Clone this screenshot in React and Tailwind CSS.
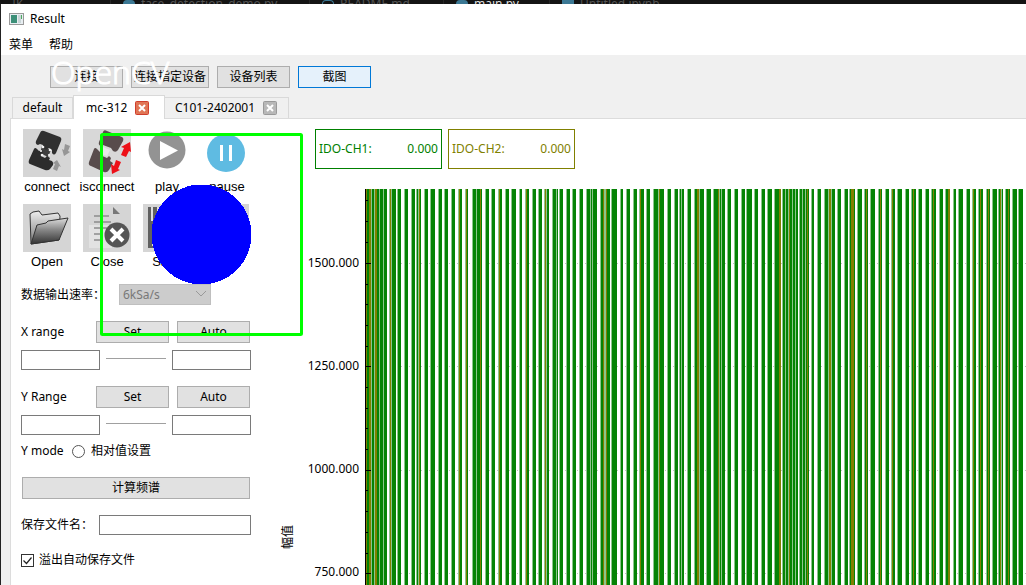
const STRIPES = [
  [366, "OGGOOLGGLOOGGLGGGLGGG"], [389, "LOLGGGG"], [397, "LGGG"], [404, "LGGG"], [411, "LGGG"],
  [416, "LGLOG"], [424, "LGGG"], [430, "LGGGG"], [438, "LGGG"], [444, "LGGG"], [451, "LGGG"],
  [458, "LOGG"], [465, "LOG"], [472, "LGGGLGGGOG"], [485, "LGGG"], [491, "LGGG"], [498, "LOGG"],
  [505, "LGGG"], [511, "LGGGG"], [519, "LGG"], [525, "LOGG"], [532, "LGGG"], [538, "LGGG"],
  [544, "LOLGG"], [552, "LGGGLG"], [559, "LGGG"], [566, "LGGG"], [572, "LGGG"], [579, "LGGG"],
  [586, "LGGGLGLGGGG"], [600, "LGGOLLOGGG"], [611, "LGGGGG"], [620, "LGG"], [626, "LGGG"],
  [633, "LGGG"], [639, "LOGGG"], [646, "LGGG"], [653, "LGGGGLOGGGG"], [667, "LGGG"], [674, "LGGG"],
  [679, "LGLGG"], [687, "LGGG"], [694, "LGGOOLGGGG"], [706, "LGGGG"], [713, "LGGGGOLGLGGG"],
  [727, "LGGG"], [734, "LGGG"], [741, "LGGG"], [746, "LGGGGG"], [754, "LGGG"], [761, "LGGG"],
  [767, "LGGGG"], [774, "LGGGGOO"], [782, "LGGLGGLOGGLGGLGG"], [799, "LGGLGGLGOG"], [811, "LGG"],
  [817, "LGGG"], [824, "LGGGLOOLGGG"], [837, "LGGG"], [844, "LGGG"], [849, "LGOOOG"],
  [857, "LGGGG"], [864, "LGOG"], [870, "LGGGG"], [878, "LGOG"], [885, "LGGG"], [891, "LOGG"],
  [897, "LGGGG"], [905, "LGGG"], [911, "LGOGG"], [918, "LGGG"], [925, "LGGG"], [931, "LGOGG"],
  [939, "LGGG"], [945, "LGGOO"], [953, "LGG"], [958, "LGGGG"], [966, "LGGG"], [972, "LOGG"],
  [978, "LGOGG"], [986, "LGOG"], [992, "LGGGG"], [998, "LGOLG"], [1005, "LGGOG"],
  [1012, "LGGGG"], [1018, "LGGGG"],
];
const TONES = { L: "#8cc68c", G: "#058305", O: "#808000" };
const FIRST = 365;
const MAJOR = [74, 177, 281, 384];
const MINOR = [11, 32, 53, 95, 115, 136, 157, 198, 219, 239, 260, 301, 322, 343, 364];

function Chart() {
  return (
    <svg className="block h-full w-full" shapeRendering="crispEdges" aria-label="幅值">
      {MAJOR.map((y) => (
        <line key={y} x1="0" x2="100%" y1={y + 0.5} y2={y + 0.5} stroke="#c4c4c4" strokeDasharray="1 3" />
      ))}
      {STRIPES.map(([x, run]) =>
        [...run].map((tone, i) => (
          <rect key={x + i} x={x + i - FIRST} y="0" width="1" height="100%" fill={TONES[tone]} />
        ))
      )}
      <rect x="0" y="0" width="1" height="100%" fill="#000" />
      {MAJOR.map((y) => <rect key={y} x="0" y={y} width="6" height="1" />)}
      {MINOR.map((y) => <rect key={y} x="0" y={y} width="3" height="1" />)}
    </svg>
  );
}

const plug = "M17 4 Q18 1 21 2 L37 8 Q39 9 38 12 L33 24 Q31 27 29 24 L29 21 L26 19 L23 21 L20 19 L20 16 L17 15 L15 16 Q12 15 13 12 Z";
const socket = "M11 20 Q12 18 14 20 L16 22 L19 21 L20 25 L18 27 L22 29 L24 27 L27 29 L26 31 L29 32 Q31 34 30 36 L27 40 Q25 42 22 41 L7 35 Q5 34 6 31 Z";

function ConnectIcon() {
  return (
    <svg className="block size-12 bg-[#d5d5d5]" viewBox="0 0 48 48" aria-hidden="true">
      <path d="M19 17 L28 21 L25 28 L17 24 Z" fill="#404040" />
      <path d={plug} fill="#303030" />
      <path d={socket} fill="#2c2c2c" />
      <g fill="#f4f4f4">
        <circle cx="20" cy="18" r="1.3" /><circle cx="27" cy="21" r="1.3" />
        <circle cx="18" cy="22" r="1.1" /><circle cx="26" cy="26" r="1.1" />
        <circle cx="19" cy="26" r="1.3" />
      </g>
      <path d="M42 15 L47 17 L45 22 L47 23 L41 27 L39 20 L41 21 Z" fill="#969696" />
      <path d="M34 31 L38 38 L36 37 L34 42 L30 40 L32 35 L30 34 Z" fill="#969696" />
    </svg>
  );
}

function DisconnectIcon() {
  return (
    <svg className="block size-12 bg-[#d8d8d8]" viewBox="0 0 48 48" aria-hidden="true">
      <g fill="#584c4c">
        <path d="M20 3 Q21 0 24 2 L39 8 Q41 9 40 12 L35 21 Q33 24 30 22 L28 19 L20 16 L18 17 Q15 16 16 13 Z" />
        <path d="M11 20 Q12 18 14 20 L17 23 L17 26 L24 29 L26 27 L28 29 L27 32 L30 34 L26 41 Q24 44 21 43 L8 37 Q5 36 6 33 Z" />
      </g>
      <path d="M20 18 L27 21 L24 27 L18 25 Z" fill="#e8e8e8" />
      <path d="M47 13 L48 23 L46 22 L43 28 L38 26 L41 19 L38 18 Z" fill="#ed1018" />
      <path d="M33 31 L38 33 L35 40 L37 41 L29 45 L28 35 L31 37 Z" fill="#ed1018" />
    </svg>
  );
}

function PlayIcon() {
  return (
    <svg className="block size-12" viewBox="0 0 48 48" aria-hidden="true">
      <circle cx="24" cy="21" r="18.5" fill="#939393" />
      <path d="M17 12 L35 21.5 L17 31 Z" fill="#fff" />
    </svg>
  );
}

function PauseIcon() {
  return (
    <svg className="block size-12" viewBox="0 0 48 48" aria-hidden="true">
      <circle cx="23" cy="24" r="19" fill="#5fbbe2" />
      <path d="M18.5 16v16M27.5 16v16" stroke="#fff" strokeWidth="3" />
    </svg>
  );
}

function OpenIcon() {
  return (
    <svg className="block size-12 bg-[#d5d5d5]" viewBox="0 0 48 48" aria-hidden="true">
      <defs>
        <linearGradient id="folder-back" x1="0" y1="0" x2="0" y2="1">
          <stop offset="0" stopColor="#eee" /><stop offset="1" stopColor="#777" />
        </linearGradient>
        <linearGradient id="folder-front" x1="0" y1="0" x2="0" y2="1">
          <stop offset="0" stopColor="#ddd" /><stop offset=".45" stopColor="#888" /><stop offset="1" stopColor="#333" />
        </linearGradient>
      </defs>
      <path d="M8 40 L7 10 L10 8 L16 7 L19 11 L35 9 L37 12 L36 36 Z" fill="url(#folder-back)" stroke="#333" />
      <path d="M8 40 L14 21 L23 19 L25 17 L45 14 L36 36 Z" fill="url(#folder-front)" stroke="#333" />
    </svg>
  );
}

function CloseIcon() {
  return (
    <svg className="block size-12 bg-[#d5d5d5]" viewBox="0 0 48 48" aria-hidden="true">
      <path d="M6 21h23v23H6z" fill="#e2e2e2" />
      <path d="M30 3 L37 10 H30 Z" fill="#777" />
      <path d="M11 12h15M11 18h17M11 24h13M11 30h9M11 36h9" stroke="#8c8c8c" strokeWidth="1.5" />
      <circle cx="34" cy="31" r="12.5" fill="#555" />
      <path d="M28 25l12 12M40 25L28 37" stroke="#fff" strokeWidth="4" />
    </svg>
  );
}

function SaveIcon() {
  return (
    <svg className="block size-12 bg-[#d5d5d5]" viewBox="0 0 48 48" aria-hidden="true">
      <path d="M5 3 H38 L43 8 V44 H5 Z" fill="#606060" />
      <path d="M8 3h2v14h-2zM14 3h18v16H14zM9 26h30v16H9z" fill="#ddd" />
    </svg>
  );
}

function Tool({ label, children }) {
  return (
    <button className="flex w-12 flex-col items-center gap-0.5 font-['Liberation_Sans',sans-serif] text-[13px] leading-4 whitespace-nowrap">
      {children}
      <span>{label}</span>
    </button>
  );
}

const push = "h-[22px] border border-[#adadad] bg-[#e1e1e1] text-center whitespace-nowrap";
const field = "h-5 min-w-0 border border-[#7a7a7a] bg-white px-1 outline-none";

function Range({ label }) {
  return (
    <fieldset className="flex flex-col gap-[7px]">
      <div className="flex items-center gap-2">
        <legend className="w-[67px]">{label}</legend>
        <button className={`${push} w-[73px]`}>Set</button>
        <button className={`${push} w-[73px]`}>Auto</button>
      </div>
      <div className="flex gap-1.5">
        <input className={`${field} w-[79px]`} aria-label={`${label} from`} />
        <span className="mt-2 h-px w-[60px] bg-[#a0a0a0]" />
        <input className={`${field} w-[79px]`} aria-label={`${label} to`} />
      </div>
    </fieldset>
  );
}

function CloseTab({ active }) {
  return (
    <svg className="size-3.5" viewBox="0 0 14 14" aria-hidden="true">
      <rect x=".5" y=".5" width="13" height="13" rx="1" fill={active ? "#e07555" : "#b8b8b8"} stroke={active ? "#d03e2c" : "#999"} />
      <path d="M4 4l6 6M10 4l-6 6" stroke="#fff" strokeWidth="2" />
    </svg>
  );
}

function Reading({ name, className }) {
  return (
    <div className={`flex h-10 w-[127px] items-center justify-between border px-[3px] ${className}`}>
      <span>{name}</span>
      <output>0.000</output>
    </div>
  );
}

function Annotations() {
  return (
    <svg className="pointer-events-none absolute inset-0 h-full w-full">
      <text x="51" y="84" fill="#fff" stroke="#fff" strokeWidth="1" className="font-['Open_Sans',sans-serif] text-[32px] font-light">OpenCV</text>
      <rect x="101.5" y="134.5" width="200" height="200" rx="1" fill="none" stroke="#0f0" strokeWidth="3" />
      <circle cx="201.5" cy="234.5" r="50" fill="#00f" shapeRendering="crispEdges" />
    </svg>
  );
}

function EditorTab({ name, className, iconClass }) {
  return (
    <span className={`flex shrink-0 gap-1.5 border-l border-[#252525] pl-3 leading-2 whitespace-nowrap ${className}`}>
      <span className={`h-1 w-3 ${iconClass}`} />
      {name}
    </span>
  );
}

export default function App() {
  return (
    <div className="relative flex h-screen flex-col overflow-hidden bg-[#f0f0f0] font-['Noto_Sans','Noto_Sans_CJK_SC',sans-serif] text-xs leading-4 text-black">
      <div className="flex h-1 shrink-0 overflow-hidden bg-[#141414] text-[#555]">
        <span className="w-[110px] shrink-0 pl-3 leading-2">IK</span>
        <EditorTab name="face_detection_demo.py" className="w-[199px]" iconClass="rounded-t-full bg-[#3b7894]" />
        <EditorTab name="README.md" className="w-[134px]" iconClass="rounded-t-full border border-b-0 border-[#3b7894]" />
        <EditorTab name="main.py" className="w-[106px] text-[#ddd]" iconClass="rounded-t-full bg-[#3b7894]" />
        <EditorTab name="Untitled.ipynb" className="w-[138px]" iconClass="bg-[#3b7894]" />
      </div>

      <div className="flex min-h-0 flex-1 flex-col border-l border-[#222]">
        <header className="shrink-0 bg-white">
          <div className="flex h-[30px] items-center gap-1.5 pl-2">
            <svg className="h-3 w-[15px]" viewBox="0 0 15 12" aria-hidden="true">
              <rect x=".5" y=".5" width="14" height="11" fill="#e8eef2" stroke="#999" />
              <rect x="2" y="2" width="6" height="8" fill="#3c8f78" />
              <rect x="9" y="2" width="3" height="8" fill="#c9d6d8" />
              <rect x="12" y="2" width="1" height="4" fill="#4fa860" />
            </svg>
            <h1>Result</h1>
          </div>
          <nav className="flex h-[21px] items-center gap-4 pl-2">
            <button>菜单</button>
            <button>帮助</button>
          </nav>
        </header>

        <div className="flex shrink-0 gap-2 pt-[11px] pl-[49px]">
          <button className={`${push} w-[73px]`}>连接</button>
          <button className={`${push} w-[78px]`}>连接指定设备</button>
          <button className={`${push} w-[73px]`}>设备列表</button>
          <button className="h-[22px] w-[73px] border border-[#0078d7] bg-[#e5f1fb]">截图</button>
        </div>

        <div className="mt-[7px] flex h-[23px] shrink-0 items-end pl-[11px]" role="tablist">
          <button role="tab" className="h-[21px] w-[61px] border border-b-0 border-[#d9d9d9]">default</button>
          <button role="tab" aria-selected="true" className="z-10 -mb-px flex h-6 w-[92px] items-center gap-2 border border-b-0 border-[#d9d9d9] bg-white pl-3">
            mc-312 <CloseTab active />
          </button>
          <button role="tab" className="flex h-[21px] w-[124px] items-center gap-2 border border-b-0 border-l-0 border-[#d9d9d9] pl-2.5">
            C101-2402001 <CloseTab />
          </button>
        </div>

        <main className="ml-[9px] flex min-h-0 flex-1 border-t border-l border-[#dcdcdc] bg-white">
          <aside className="w-[263px] shrink-0 pt-2.5 pl-2.5">
            <div className="ml-0.5 grid w-max grid-cols-4 gap-x-3 gap-y-[9px]">
              <Tool label="connect"><ConnectIcon /></Tool>
              <Tool label="isconnect"><DisconnectIcon /></Tool>
              <Tool label="play"><PlayIcon /></Tool>
              <Tool label="pause"><PauseIcon /></Tool>
              <Tool label="Open"><OpenIcon /></Tool>
              <Tool label="Close"><CloseIcon /></Tool>
              <Tool label="Save"><SaveIcon /></Tool>
              <div className="h-12 w-[46px] bg-[#d5d5d5]" />
            </div>
            <div className="mt-3.5 flex items-center">
              <label htmlFor="rate" className="w-[98px]">数据输出速率：</label>
              <div className="relative">
                <select id="rate" disabled className="block h-[21px] w-[92px] appearance-none border border-[#bfbfbf] bg-[#ccc] pl-[3px] text-[#787878] opacity-100">
                  <option>6kSa/s</option>
                </select>
                <svg className="pointer-events-none absolute top-1.5 right-1 h-2 w-3" viewBox="0 0 12 8" aria-hidden="true">
                  <path d="M1 1l5 5 5-5" fill="none" stroke="#999" />
                </svg>
              </div>
            </div>
            <div className="mt-4 flex flex-col gap-4">
              <Range label="X range" />
              <Range label="Y Range" />
            </div>
            <div className="mt-2 flex items-center">
              <span className="w-[51px]">Y mode</span>
              <input id="relative" type="radio" className="mr-1.5 size-[13px] appearance-none rounded-full border border-[#555] bg-white" />
              <label htmlFor="relative">相对值设置</label>
            </div>
            <button className={`${push} mt-[18px] ml-px block w-[228px]`}>计算频谱</button>
            <div className="mt-4 flex items-center">
              <label htmlFor="file" className="w-[78px]">保存文件名：</label>
              <input id="file" className={`${field} w-[152px]`} />
            </div>
            <div className="mt-[17px] flex items-center gap-[5px]">
              <div className="relative size-[13px]">
                <input id="overflow" type="checkbox" defaultChecked className="block size-[13px] appearance-none border border-[#333] bg-white" />
                <svg className="pointer-events-none absolute inset-0 size-[13px]" viewBox="0 0 13 13" aria-hidden="true">
                  <path d="M2.5 6.5l3 3 5-6" fill="none" stroke="#222" strokeWidth="1.2" />
                </svg>
              </div>
              <label htmlFor="overflow">溢出自动保存文件</label>
            </div>
          </aside>

          <section className="flex min-w-0 flex-1 flex-col">
            <div className="mt-2.5 ml-[41px] flex gap-1.5">
              <Reading name="IDO-CH1:" className="border-[#008000] text-[#008000]" />
              <Reading name="IDO-CH2:" className="border-[#808000] text-[#808000]" />
            </div>
            <div className="mt-5 flex min-h-0 flex-1">
              <div className="flex w-[91px] shrink-0">
                <div className="flex w-8 flex-col items-center pt-[336px]">
                  <span className="rotate-180 [writing-mode:vertical-rl]"><span className="inline-block [text-orientation:sideways]">幅值</span></span>
                </div>
                <div className="flex flex-1 flex-col items-end gap-[87px] pt-[66px] pr-[6px]">
                  <span>1500.000</span>
                  <span>1250.000</span>
                  <span>1000.000</span>
                  <span>750.000</span>
                </div>
              </div>
              <div className="min-w-0 flex-1"><Chart /></div>
            </div>
          </section>
        </main>
      </div>
      <Annotations />
    </div>
  );
}
